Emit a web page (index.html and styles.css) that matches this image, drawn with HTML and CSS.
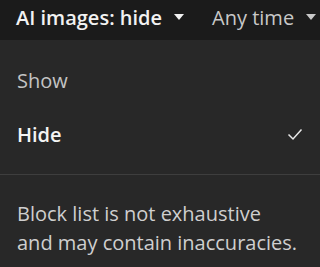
FILE: index.html
```html
<!DOCTYPE html>
<html lang="en">
<head>
    <meta charset="UTF-8">
    <meta name="viewport" content="width=device-width, initial-scale=1.0">
    <title>AI images filter</title>
    <link rel="stylesheet" href="styles.css">
</head>
<body>
    <div class="toolbar">
        <div class="dropdown active">AI images: hide <span class="caret"></span></div>
        <div class="dropdown">Any time <span class="caret"></span></div>
    </div>

    <div class="menu">
        <div class="options">
            <div class="option">Show</div>
            <div class="option selected">
                Hide
                <svg class="check" width="16" height="13" viewBox="0 0 16 13">
                    <path d="M1.5 6.5 L6 11 L14.5 1.5" fill="none" stroke="#e8e8e8" stroke-width="1.5"/>
                </svg>
            </div>
        </div>
        <div class="note">Block list is not exhaustive<br>and may contain inaccuracies.</div>
    </div>
</body>
</html>
```

FILE: styles.css
```css
* {
    margin: 0;
    padding: 0;
    box-sizing: border-box;
    font-family: 'Open Sans', 'Liberation Sans', sans-serif;
}

body {
    background: #282828;
    color: #d0d0d0;
    width: 320px;
    height: 267px;
    overflow: hidden;
}

.toolbar {
    display: flex;
    align-items: center;
    gap: 28px;
    height: 40px;
    padding-left: 16px;
    padding-bottom: 6px;
    background: #1b1b1b;
    white-space: nowrap;
}

.dropdown {
    display: flex;
    align-items: center;
    gap: 12px;
    font-size: 20px;
    color: #c8c8c8;
}

.dropdown.active {
    color: #f2f2f2;
    font-weight: 600;
}

.caret {
    width: 0;
    height: 0;
    border-left: 5px solid transparent;
    border-right: 5px solid transparent;
    border-top: 6px solid currentColor;
}

.options {
    padding: 13px 0;
    border-bottom: 1px solid #3e3e3e;
}

.option {
    display: flex;
    align-items: center;
    justify-content: space-between;
    height: 54px;
    padding: 0 17px;
    font-size: 20px;
    color: #c4c4c4;
}

.option.selected {
    color: #f4f4f4;
    font-weight: 600;
}

.note {
    padding: 24px 17px 0;
    font-size: 20px;
    line-height: 29px;
    color: #cfcfcf;
    white-space: nowrap;
}
```
